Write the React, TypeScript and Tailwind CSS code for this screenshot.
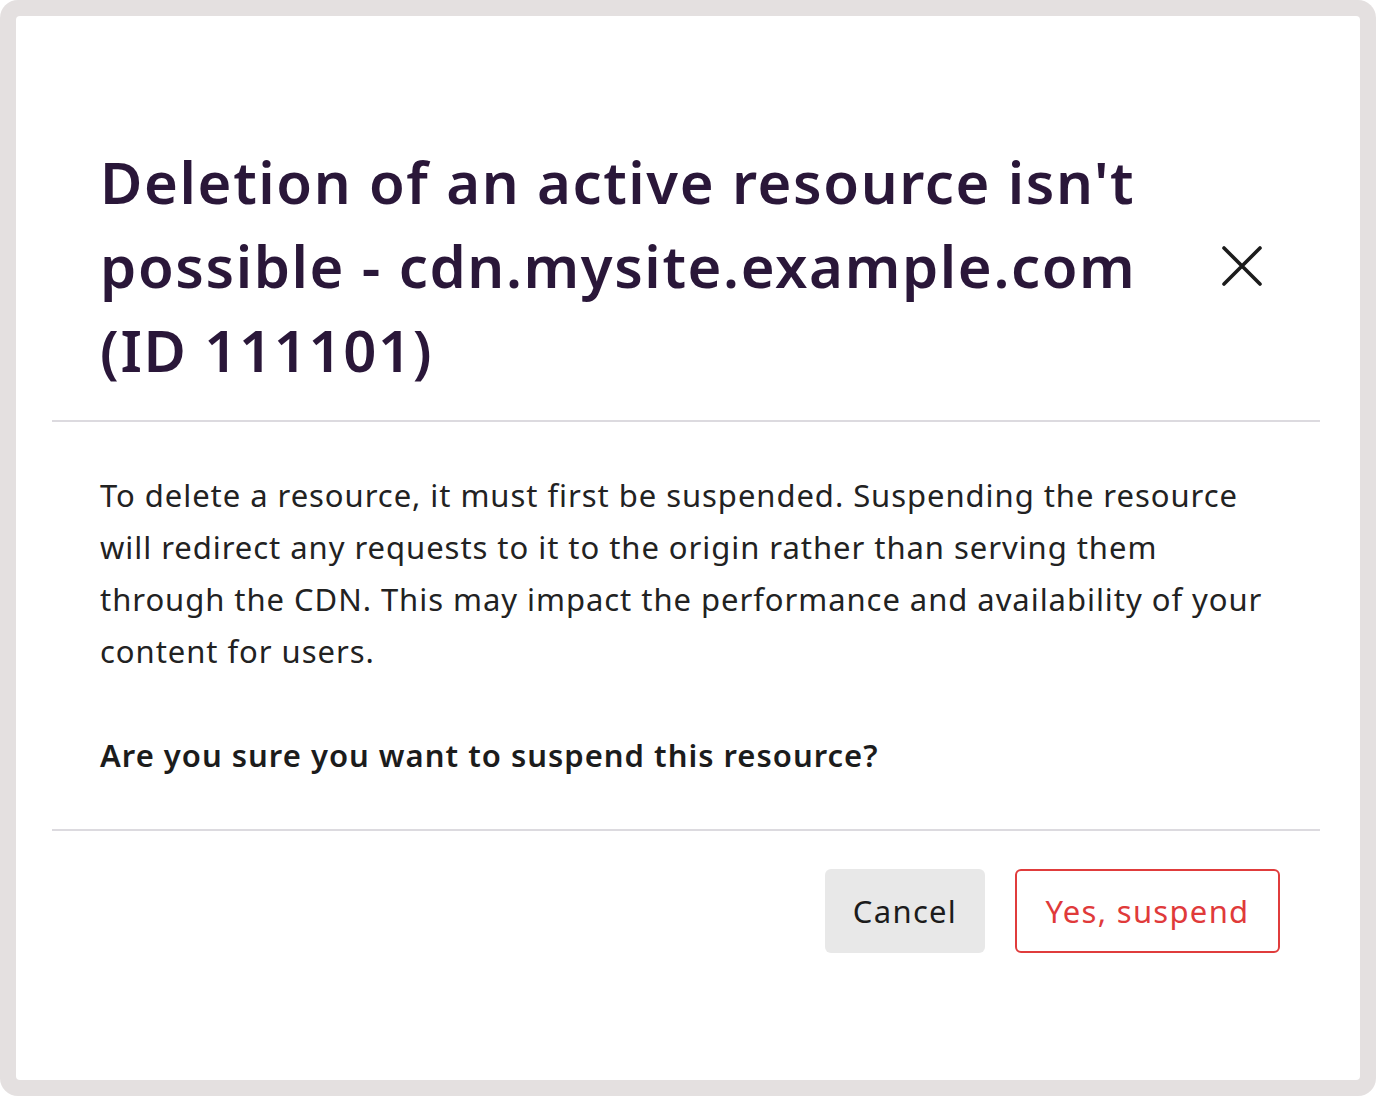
export default function App() {
  return (
    <div className="h-[1096px] w-[1376px] bg-white">
      <div className="h-full w-full rounded-[18px] bg-[#e4e0e0] p-4">
        <div className="flex h-full flex-col rounded-[4px] bg-white pl-9 pr-10 font-['Noto_Sans',sans-serif]">
          <div className="flex items-center justify-between border-b-2 border-[#dcdadf] px-12 pt-[124px] pb-[28px]">
            <h2 className="text-[58px] font-semibold leading-[84px] tracking-[1.6px] text-[#2a1739]">
              Deletion of an active resource isn't
              <br />
              possible - cdn.mysite.example.com
              <br />
              (ID 111101)
            </h2>
            <button className="flex h-[60px] w-[60px] items-center justify-center text-[#1c1c1c]">
              <svg width="40" height="40" viewBox="0 0 40 40" fill="none">
                <path
                  d="M2 2L38 38M38 2L2 38"
                  stroke="currentColor"
                  strokeWidth="3.6"
                  strokeLinecap="round"
                />
              </svg>
            </button>
          </div>

          <div className="border-b-2 border-[#dcdadf] px-12 pt-[47px] pb-[48px] text-[31px] leading-[52px] tracking-[0.95px] text-[#222222]">
            <p>
              To delete a resource, it must first be suspended. Suspending the resource
              <br />
              will redirect any requests to it to the origin rather than serving them
              <br />
              through the CDN. This may impact the performance and availability of your
              <br />
              content for users.
            </p>
            <p className="mt-[52px] font-semibold tracking-[1px] text-[#1c1c1c]">
              Are you sure you want to suspend this resource?
            </p>
          </div>

          <div className="flex justify-end gap-[30px] pr-10 pt-[38px]">
            <button className="h-[84px] w-[160px] rounded-[6px] bg-[#e8e8e8] text-[31px] tracking-[1.3px] text-[#1c1c1c]">
              Cancel
            </button>
            <button className="h-[84px] w-[265px] rounded-[6px] border-2 border-[#e03c3c] bg-white text-[31px] tracking-[1.3px] text-[#e03a3a]">
              Yes, suspend
            </button>
          </div>
        </div>
      </div>
    </div>
  );
}
